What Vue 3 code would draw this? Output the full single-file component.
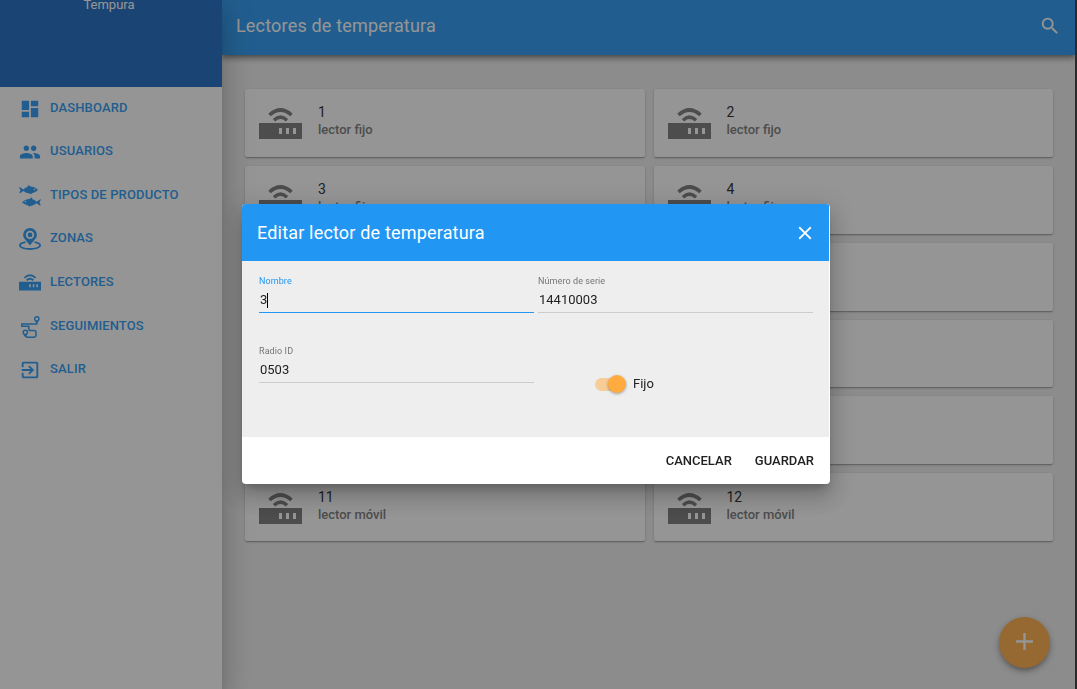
<script setup>
import { ref } from 'vue'

const nav = [
  { label: 'DASHBOARD', icon: 'dashboard' },
  { label: 'USUARIOS', icon: 'people' },
  { label: 'TIPOS DE PRODUCTO', icon: 'fish' },
  { label: 'ZONAS', icon: 'zone' },
  { label: 'LECTORES', icon: 'reader' },
  { label: 'SEGUIMIENTOS', icon: 'route' },
  { label: 'SALIR', icon: 'exit' },
]

const readers = Array.from({ length: 12 }, (_, i) => ({
  name: String(i + 1),
  kind: i < 10 ? 'lector fijo' : 'lector móvil',
}))

const nombre = ref('3')
const serie = ref('14410003')
const radio = ref('0503')
const fijo = ref(true)
</script>

<template>
  <div class="app">
    <aside class="sidebar">
      <div class="brand"><span>Tempura</span></div>
      <nav class="nav">
        <a v-for="n in nav" :key="n.label" href="#" class="nav-link">
          <svg v-if="n.icon === 'dashboard'" class="nav-icon" viewBox="0 0 24 24" aria-hidden="true">
            <path d="M3 13h8V3H3v10zm0 8h8v-6H3v6zm10 0h8V11h-8v10zm0-18v6h8V3h-8z" />
          </svg>
          <svg v-else-if="n.icon === 'people'" class="nav-icon" viewBox="0 0 24 24" aria-hidden="true">
            <path d="M16 11c1.66 0 2.99-1.34 2.99-3S17.66 5 16 5c-1.66 0-3 1.34-3 3s1.34 3 3 3zm-8 0c1.66 0 2.99-1.34 2.99-3S9.66 5 8 5C6.34 5 5 6.34 5 8s1.34 3 3 3zm0 2c-2.33 0-7 1.17-7 3.5V19h14v-2.5c0-2.33-4.67-3.5-7-3.5zm8 0c-.29 0-.62.02-.97.05 1.16.84 1.97 1.97 1.97 3.45V19h6v-2.5c0-2.33-4.67-3.5-7-3.5z" />
          </svg>
          <svg v-else-if="n.icon === 'fish'" class="nav-icon" viewBox="0 0 22 22" aria-hidden="true">
            <g fill-rule="evenodd">
              <path d="M0 2l1 .2L4.500 4.400Q6.500 2.500 8.500 2L9.300 0l2.200 1.600Q16 1.800 19 5q-3 2.800-6 3.300L12 9.300l-1.500-.7Q7 8.400 4.500 6L1 8.300.200 8 1.500 5.200zM15.500 3.700a.7.700 0 1 0 .1 0z" />
              <path transform="translate(22 12.300) scale(-1 1)" d="M0 2l1 .2L4.500 4.400Q6.500 2.500 8.500 2L9.300 0l2.200 1.600Q16 1.800 19 5q-3 2.800-6 3.300L12 9.300l-1.500-.7Q7 8.400 4.500 6L1 8.300.200 8 1.500 5.200zM15.500 3.700a.7.700 0 1 0 .1 0z" />
            </g>
          </svg>
          <svg v-else-if="n.icon === 'zone'" class="nav-icon" viewBox="0 0 22 22" aria-hidden="true">
            <path fill-rule="evenodd" d="M11 0a6.900 6.900 0 0 0-6.900 6.900C4.100 10.500 9 14 11 17.500c2-3.500 6.900-7 6.900-10.600A6.900 6.900 0 0 0 11 0zm0 2.700a4.200 4.200 0 1 1 0 8.400 4.200 4.200 0 0 1 0-8.400z" />
            <circle cx="11" cy="6.900" r="2.400" />
            <path class="line thick" d="M6.500 14.200C3 14.800.9 16 .9 17.300.9 19.500 5.500 21 11 21s10.100-1.500 10.100-3.700c0-1.300-2.100-2.500-5.600-3.100" />
          </svg>
          <svg v-else-if="n.icon === 'reader'" class="nav-icon" viewBox="0 -4 43 43" aria-hidden="true">
            <path fill-rule="evenodd" d="M0 15h43v17H0zM20 20v6h3v-6zM27 20v6h3v-6zM34 20v6h3v-6z" />
            <path class="line reader-arc" d="M10.500 7.500Q21.500-2.500 32.500 7.500M15 12.200Q21.500 6.500 28 12.200" />
          </svg>
          <svg v-else-if="n.icon === 'route'" class="nav-icon" viewBox="0 0 22 22" aria-hidden="true">
            <path fill-rule="evenodd" d="M17.800 0A2.900 2.900 0 0 0 15 2.900C15 4.800 17.200 6 17.800 8c.6-2 2.900-3.200 2.900-5.100A2.900 2.900 0 0 0 17.800 0zm0 1.500a1.400 1.400 0 1 1 0 2.800 1.400 1.400 0 0 1 0-2.800z" />
            <path fill-rule="evenodd" d="M6.300 13.500a2.900 2.900 0 0 0-2.900 2.900c0 1.900 2.300 3.100 2.900 5.100.6-2 2.900-3.200 2.900-5.100a2.900 2.900 0 0 0-2.900-2.900zm0 1.500a1.400 1.400 0 1 1 0 2.800 1.400 1.400 0 0 1 0-2.800z" />
            <path class="line" d="M17.800 7v1H2.800v2.300h7v2.400q0 1.800 1.800 1.800H15q2 0 2 2v2.800q0 2-2 2H9q-2 0-2.500-1.500" />
          </svg>
          <svg v-else class="nav-icon" viewBox="0 0 24 24" aria-hidden="true">
            <path d="M10.090 15.590L11.500 17l5-5-5-5-1.410 1.410L12.670 11H3v2h9.670l-2.580 2.590zM19 3H5c-1.110 0-2 .9-2 2v4h2V5h14v14H5v-4H3v4c0 1.100.89 2 2 2h14c1.100 0 2-.9 2-2V5c0-1.100-.9-2-2-2z" />
          </svg>
          <span>{{ n.label }}</span>
        </a>
      </nav>
    </aside>

    <div class="content">
      <header class="toolbar">
        <h1>Lectores de temperatura</h1>
        <button class="icon-button" type="button" aria-label="Buscar">
          <svg viewBox="0 0 24 24" aria-hidden="true">
            <path d="M15.500 14h-.79l-.28-.27A6.471 6.471 0 0 0 16 9.500 6.500 6.500 0 1 0 9.500 16c1.610 0 3.090-.59 4.230-1.570l.27.28v.79l5 4.990L20.490 19l-4.990-5zm-6 0C7.010 14 5 11.990 5 9.500S7.010 5 9.500 5 14 7.010 14 9.500 11.990 14 9.500 14z" />
          </svg>
        </button>
      </header>
      <main class="cards">
        <article v-for="r in readers" :key="r.name" class="card">
          <svg class="card-icon" viewBox="0 0 43 32" aria-hidden="true">
            <path fill-rule="evenodd" d="M0 15h43v16H0zM20 20v6h3v-6zM27 20v6h3v-6zM34 20v6h3v-6z" />
            <path class="line reader-arc" d="M10.500 7Q21.500-3 32.500 7M15 12.200Q21.500 6.200 28 12.200" />
          </svg>
          <div>
            <h2>{{ r.name }}</h2>
            <p>{{ r.kind }}</p>
          </div>
        </article>
      </main>
      <button class="fab" type="button" aria-label="Añadir lector">
        <svg viewBox="0 0 24 24" aria-hidden="true"><path d="M19 13h-6v6h-2v-6H5v-2h6V5h2v6h6v2z" /></svg>
      </button>
    </div>

    <div class="backdrop">
      <form class="dialog" role="dialog" aria-labelledby="dialog-title" @submit.prevent>
        <header class="dialog-bar">
          <h2 id="dialog-title">Editar lector de temperatura</h2>
          <button class="icon-button" type="button" aria-label="Cerrar">
            <svg viewBox="0 0 24 24" aria-hidden="true">
              <path d="M19 6.410L17.590 5 12 10.590 6.410 5 5 6.410 10.590 12 5 17.590 6.410 19 12 13.410 17.590 19 19 17.590 13.410 12z" />
            </svg>
          </button>
        </header>
        <div class="fields">
          <div class="field active">
            <label for="nombre">Nombre</label>
            <input id="nombre" v-model="nombre" type="text" autocomplete="off" />
            <span class="caret" aria-hidden="true"></span>
          </div>
          <div class="field">
            <label for="serie">Número de serie</label>
            <input id="serie" v-model="serie" type="text" autocomplete="off" />
          </div>
          <div class="field">
            <label for="radio">Radio ID</label>
            <input id="radio" v-model="radio" type="text" autocomplete="off" />
          </div>
          <div class="switch">
            <input id="fijo" v-model="fijo" type="checkbox" />
            <label for="fijo">Fijo</label>
          </div>
        </div>
        <footer class="actions">
          <button type="button">CANCELAR</button>
          <button type="submit">GUARDAR</button>
        </footer>
      </form>
    </div>
  </div>
</template>

<style>
body {
  margin: 0;
  background: #333;
}
</style>

<style scoped>
* {
  box-sizing: border-box;
}
.app {
  display: flex;
  height: 100vh;
  overflow: hidden;
  font-family: Roboto, "Liberation Sans", sans-serif;
  font-size: 13px;
  line-height: 18px;
  color: #212121;
}
h1,
h2,
p {
  margin: 0;
  font-weight: 400;
}
button {
  border: 0;
  padding: 0;
  background: none;
  font: inherit;
  color: inherit;
  cursor: pointer;
}
svg {
  display: block;
  fill: currentColor;
}
.line {
  fill: none;
  stroke: currentColor;
  stroke-width: 1.5;
}
.thick {
  stroke-width: 1.8;
}
.reader-arc {
  stroke-width: 3.6;
}

.sidebar {
  position: relative;
  z-index: 2;
  flex: none;
  width: 222px;
  background: #fff;
  box-shadow: 0 8px 10px -5px rgba(0, 0, 0, 0.2), 0 16px 24px 2px rgba(0, 0, 0, 0.14), 0 6px 30px 5px rgba(0, 0, 0, 0.12);
}
.brand {
  height: 87px;
  padding-right: 4px;
  background: #1565c0;
  color: #fff;
  line-height: 10px;
  text-align: center;
}
.nav {
  display: grid;
  grid-auto-rows: 1fr;
  height: 305px;
}
.nav-link {
  display: flex;
  align-items: center;
  gap: 9px;
  padding: 0 19px 2px;
  color: #2196f3;
  font-weight: 500;
  letter-spacing: 0.01em;
  text-decoration: none;
}
.nav-icon {
  flex: none;
  width: 22px;
  height: 22px;
  margin-top: 2px;
}

.content {
  flex: 1;
  min-width: 0;
  margin-right: 2px;
  overflow: hidden;
  background: #eee;
}
.toolbar {
  position: relative;
  display: flex;
  align-items: center;
  justify-content: space-between;
  height: 55px;
  padding: 0 14px 4px;
  background: #2196f3;
  color: #fff;
  box-shadow: 0 2px 4px -1px rgba(0, 0, 0, 0.3), 0 4px 5px 0 rgba(0, 0, 0, 0.24), 0 1px 10px 0 rgba(0, 0, 0, 0.2);
}
h1,
.dialog-bar h2 {
  font-size: 18px;
  line-height: 24px;
  letter-spacing: 0.01em;
}
.icon-button svg {
  width: 22px;
  height: 22px;
}
.cards {
  display: grid;
  grid-template-columns: 1fr 1fr;
  grid-auto-rows: 1fr;
  gap: 9px;
  height: 520px;
  padding: 34px 22px 34px 23px;
}
.card {
  display: flex;
  align-items: center;
  gap: 16px;
  padding: 0 14px;
  border-radius: 2px;
  background: #fff;
  box-shadow: 0 1px 3px 0 rgba(0, 0, 0, 0.2), 0 1px 1px 0 rgba(0, 0, 0, 0.14), 0 2px 1px -1px rgba(0, 0, 0, 0.12);
}
.card-icon {
  width: 43px;
  height: 32px;
  margin-top: 3px;
  color: #757575;
}
.card div {
  padding-bottom: 3px;
}
.card h2 {
  font-size: 14px;
}
.card p {
  font-weight: 500;
  color: #757575;
}
.fab {
  position: fixed;
  right: 27px;
  bottom: 21px;
  display: grid;
  place-items: center;
  width: 51px;
  height: 51px;
  padding-bottom: 2px;
  border-radius: 50%;
  background: #ffab40;
  color: #fff;
  box-shadow: 0 3px 5px -1px rgba(0, 0, 0, 0.3), 0 3px 8px 0 rgba(0, 0, 0, 0.24);
}
.fab svg {
  width: 29px;
  height: 29px;
}

.backdrop {
  position: fixed;
  inset: 0;
  z-index: 3;
  display: grid;
  place-items: center;
  padding: 0 5px 1px 0;
  background: rgba(33, 33, 33, 0.48);
}
.dialog {
  width: 588px;
  max-width: 90%;
  border-radius: 4px;
  overflow: hidden;
  background: #fff;
  box-shadow: 0 7px 8px -4px rgba(0, 0, 0, 0.2), 0 13px 19px 2px rgba(0, 0, 0, 0.14), 0 5px 24px 4px rgba(0, 0, 0, 0.12);
}
.dialog-bar {
  display: flex;
  align-items: center;
  justify-content: space-between;
  height: 57px;
  margin-right: 1px;
  padding: 1px 13px 0 15px;
  background: #2196f3;
  color: #fff;
}
.fields {
  display: grid;
  grid-template-columns: 1fr 1fr;
  grid-auto-rows: 70px;
  column-gap: 4px;
  margin-right: 1px;
  padding: 14px 16px 22px 17px;
  background: #eee;
}
.field {
  position: relative;
  display: flex;
  flex-direction: column;
}
.field label {
  font-size: 9px;
  line-height: 12px;
  letter-spacing: 0.01em;
  color: #757575;
}
.field input {
  width: 100%;
  height: 26px;
  border: 0;
  border-bottom: 1px solid #ccc;
  padding: 0 1px;
  outline: 0;
  background: none;
  font: inherit;
  color: #212121;
}
.field.active label {
  color: #2196f3;
}
.field.active input {
  border-color: #2196f3;
  caret-color: transparent;
}
.caret {
  position: absolute;
  left: 8px;
  top: 18px;
  width: 1px;
  height: 15px;
  background: #000;
}
.switch {
  display: flex;
  align-items: center;
  gap: 6px;
  height: 36px;
  margin-top: 21px;
  padding-left: 57px;
}
.switch input {
  appearance: none;
  position: relative;
  width: 32px;
  height: 18px;
  margin: 0;
}
.switch input::before {
  content: "";
  position: absolute;
  inset: 3px 2px 2px 0;
  border-radius: 7px;
  background: rgba(255, 171, 64, 0.5);
}
.switch input::after {
  content: "";
  position: absolute;
  top: 0;
  left: 0;
  width: 18px;
  height: 18px;
  border-radius: 50%;
  background: #ffab40;
  box-shadow: 0 1px 3px rgba(0, 0, 0, 0.35);
}
.switch input:checked::after {
  left: 13px;
}
.actions {
  display: flex;
  align-items: center;
  justify-content: flex-end;
  gap: 23px;
  height: 47px;
  padding: 0 16px;
}
.actions button {
  font-weight: 500;
}
</style>
